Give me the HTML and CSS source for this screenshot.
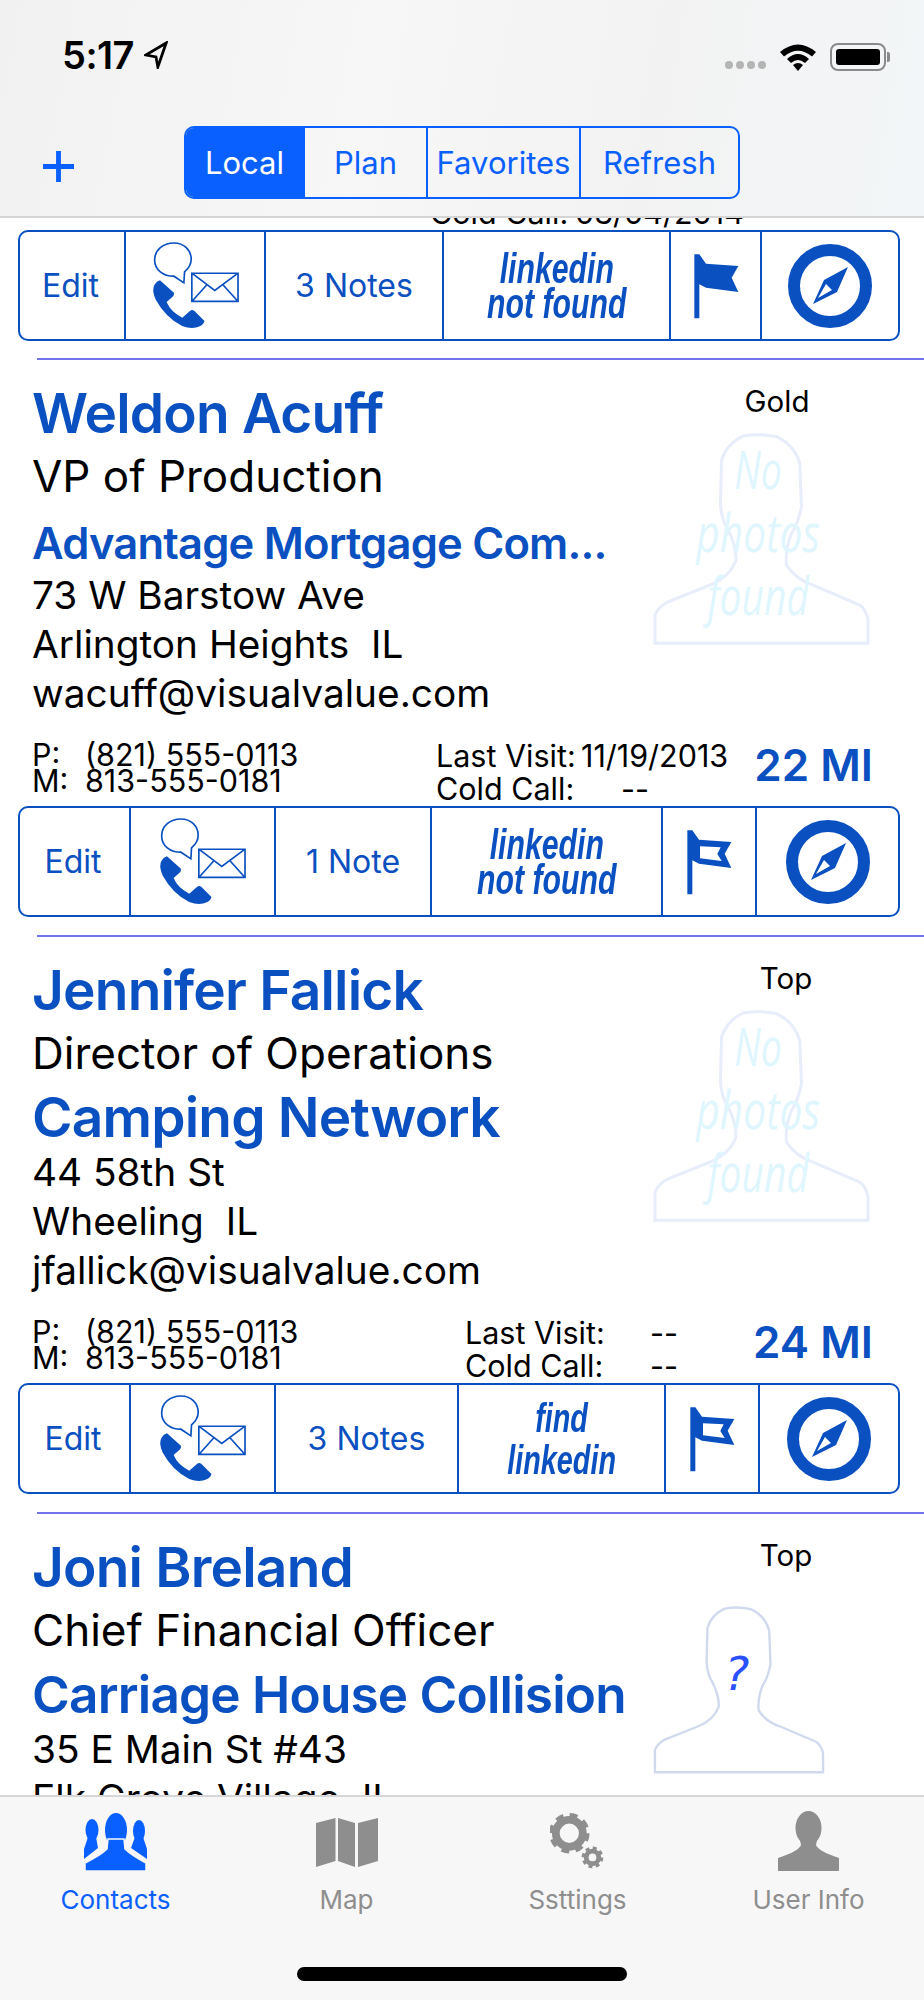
FILE: index.html
```html
<!DOCTYPE html>
<html lang="en">
<head>
    <meta charset="UTF-8">
    <meta name="viewport" content="width=device-width, initial-scale=1.0">
    <title>Contacts</title>
    <link rel="stylesheet" href="styles.css">
</head>
<body>
    <svg class="sprites" width="0" height="0">
        <symbol id="contact-icon" viewBox="70 40 290 280">
            <path class="line" d="M150 55 C118 55 92 76 92 106 C92 136 118 155 150 155 L180 175 L182 142 C196 130 202 118 202 104 C202 76 180 55 150 55Z"/>
            <path class="line" d="M204 146 H343 V231 H204Z M204 146 L273 198 L343 146 M204 231 L250 180 M343 231 L297 180"/>
            <path class="solid" d="M108 167 L150 205 Q152 212 146 217 L128 233 Q140 262 175 280 L200 258 Q206 255 212 260 L242 290 Q240 300 228 306 Q205 316 175 305 Q125 280 95 225 Q82 195 92 180 Q98 170 108 167Z"/>
        </symbol>
        <symbol id="flag-solid" viewBox="130 80 150 210">
            <path class="solid" d="M140 90 H155 L175 118 L272 125 L252 160 L272 203 L175 190 L155 180 V282 H140Z"/>
        </symbol>
        <symbol id="flag-open" viewBox="130 80 150 210">
            <path class="solid" fill-rule="evenodd" d="M140 90 H155 L175 118 L272 125 L252 160 L272 203 L175 190 L155 180 V282 H140Z M178 138 L240 141 L230 161 L243 182 L178 174Z"/>
        </symbol>
        <symbol id="compass" viewBox="-42 -42 84 84">
            <circle class="ring" r="36"/>
            <path class="solid" fill-rule="evenodd" d="M18 -19 L-6 -6 L-17 18 L7 6Z M-12 12 L-4 -2 L2 4Z"/>
        </symbol>
        <symbol id="person" viewBox="60 30 670 650">
            <path d="M75 670 L75 585 Q85 560 115 545 L240 495 Q300 470 318 420 Q320 380 295 330 Q270 290 272 240 L275 120 Q290 70 340 47 Q390 38 440 49 Q495 75 510 130 L515 260 Q505 310 485 340 Q465 390 470 435 Q500 480 550 495 L690 555 Q710 570 715 600 L715 670Z"/>
        </symbol>
    </svg>

    <div class="screen">
        <header class="top">
            <div class="status">
                <div class="time">5:17
                    <svg class="arrow" viewBox="0 0 26 30"><path d="M24 2 L2 15 L13 17 L15 28Z"/></svg>
                </div>
                <div class="status-right">
                    <div class="dots"><i></i><i></i><i></i><i></i></div>
                    <svg class="wifi" viewBox="0 0 38 28">
                        <path d="M1 9 Q19 -6 37 9 L33 13.500 Q19 2 5 13.500Z"/>
                        <path d="M8 16 Q19 6 30 16 L26 20 Q19 14 12 20Z"/>
                        <path d="M14 22 Q19 18 24 22 L19 28Z"/>
                    </svg>
                    <div class="battery"><span></span></div>
                </div>
            </div>
            <nav class="nav">
                <svg class="plus" viewBox="0 0 32 32"><path d="M13.500 0 H18.500 V13.500 H32 V18.500 H18.500 V32 H13.500 V18.500 H0 V13.500 H13.500Z"/></svg>
                <div class="segments">
                    <div class="segment active seg-local">Local</div>
                    <div class="segment seg-plan">Plan</div>
                    <div class="segment seg-fav">Favorites</div>
                    <div class="segment seg-refresh">Refresh</div>
                </div>
            </nav>
        </header>

        <main class="list">
            <div class="info info-clipped">
                <div class="visit">
                    <div class="visit-line"><span class="visit-label">Last Visit:</span>11/19/2013</div>
                    <div class="visit-line"><span class="visit-label">Cold Call:</span>03/04/2014</div>
                </div>
            </div>
            <div class="actions actions-a">
                <div class="action">Edit</div>
                <div class="action"><svg class="icon-contact"><use href="#contact-icon"/></svg></div>
                <div class="action">3 Notes</div>
                <div class="action linkedin"><span>linkedin<br>not found</span></div>
                <div class="action"><svg class="icon-flag"><use href="#flag-solid"/></svg></div>
                <div class="action"><svg class="icon-compass"><use href="#compass"/></svg></div>
            </div>

            <section class="card">
                <div class="rule"></div>
                <div class="card-top">
                    <div class="details">
                        <div class="name">Weldon Acuff</div>
                        <div class="role">VP of Production</div>
                        <div class="company company-small">Advantage Mortgage Com...</div>
                        <div class="line">73 W Barstow Ave</div>
                        <div class="line">Arlington Heights&nbsp; IL</div>
                        <div class="line">wacuff@visualvalue.com</div>
                    </div>
                    <div class="photo">
                        <div class="tier">Gold</div>
                        <svg class="avatar" viewBox="60 30 670 650">
                            <use href="#person" class="outline faded" x="60" y="30" width="670" height="650"/>
                            <text class="no-photo" x="385" y="205" text-anchor="middle" textLength="143" lengthAdjust="spacingAndGlyphs">No</text>
                            <text class="no-photo" x="385" y="395" text-anchor="middle" textLength="372" lengthAdjust="spacingAndGlyphs">photos</text>
                            <text class="no-photo" x="385" y="585" text-anchor="middle" textLength="305" lengthAdjust="spacingAndGlyphs">found</text>
                        </svg>
                    </div>
                </div>
                <div class="info">
                    <div class="phones">
                        <div class="phone"><span class="phone-label">P:</span>(821) 555-0113</div>
                        <div class="phone"><span class="phone-label">M:</span>813-555-0181</div>
                    </div>
                    <div class="visit">
                        <div class="visit-line"><span class="visit-label">Last Visit:</span>11/19/2013</div>
                        <div class="visit-line"><span class="visit-label">Cold Call:</span><span class="dash">--</span></div>
                    </div>
                    <div class="distance">22 MI</div>
                </div>
                <div class="actions actions-b">
                    <div class="action">Edit</div>
                    <div class="action"><svg class="icon-contact"><use href="#contact-icon"/></svg></div>
                    <div class="action">1 Note</div>
                    <div class="action linkedin"><span>linkedin<br>not found</span></div>
                    <div class="action"><svg class="icon-flag"><use href="#flag-open"/></svg></div>
                    <div class="action"><svg class="icon-compass"><use href="#compass"/></svg></div>
                </div>
            </section>

            <section class="card">
                <div class="rule"></div>
                <div class="card-top">
                    <div class="details">
                        <div class="name">Jennifer Fallick</div>
                        <div class="role">Director of Operations</div>
                        <div class="company">Camping Network</div>
                        <div class="line">44 58th St</div>
                        <div class="line">Wheeling&nbsp; IL</div>
                        <div class="line">jfallick@visualvalue.com</div>
                    </div>
                    <div class="photo">
                        <div class="tier tier-top">Top</div>
                        <svg class="avatar" viewBox="60 30 670 650">
                            <use href="#person" class="outline faded" x="60" y="30" width="670" height="650"/>
                            <text class="no-photo" x="385" y="205" text-anchor="middle" textLength="143" lengthAdjust="spacingAndGlyphs">No</text>
                            <text class="no-photo" x="385" y="395" text-anchor="middle" textLength="372" lengthAdjust="spacingAndGlyphs">photos</text>
                            <text class="no-photo" x="385" y="585" text-anchor="middle" textLength="305" lengthAdjust="spacingAndGlyphs">found</text>
                        </svg>
                    </div>
                </div>
                <div class="info">
                    <div class="phones">
                        <div class="phone"><span class="phone-label">P:</span>(821) 555-0113</div>
                        <div class="phone"><span class="phone-label">M:</span>813-555-0181</div>
                    </div>
                    <div class="visit visit-empty">
                        <div class="visit-line"><span class="visit-label">Last Visit:</span><span class="dash">--</span></div>
                        <div class="visit-line"><span class="visit-label">Cold Call:</span><span class="dash">--</span></div>
                    </div>
                    <div class="distance">24 MI</div>
                </div>
                <div class="actions actions-c">
                    <div class="action">Edit</div>
                    <div class="action"><svg class="icon-contact"><use href="#contact-icon"/></svg></div>
                    <div class="action">3 Notes</div>
                    <div class="action linkedin linkedin-find"><span>find<br>linkedin</span></div>
                    <div class="action"><svg class="icon-flag"><use href="#flag-open"/></svg></div>
                    <div class="action"><svg class="icon-compass"><use href="#compass"/></svg></div>
                </div>
            </section>

            <section class="card">
                <div class="rule"></div>
                <div class="card-top">
                    <div class="details">
                        <div class="name">Joni Breland</div>
                        <div class="role">Chief Financial Officer</div>
                        <div class="company company-mid">Carriage House Collision</div>
                        <div class="line">35 E Main St #43</div>
                        <div class="line">Elk Grove Village&nbsp; IL</div>
                    </div>
                    <div class="photo">
                        <div class="tier tier-top">Top</div>
                        <svg class="avatar avatar-small" viewBox="60 30 670 650">
                            <use href="#person" class="outline" x="60" y="30" width="670" height="650"/>
                            <text class="question" x="387" y="358" text-anchor="middle">?</text>
                        </svg>
                    </div>
                </div>
            </section>
        </main>

        <footer class="tabs">
            <div class="tab-row">
                <div class="tab active">
                    <svg class="tab-icon icon-people" viewBox="0 0 63 58">
                        <ellipse cx="8" cy="17" rx="6.500" ry="11"/>
                        <ellipse cx="55" cy="18" rx="6" ry="11"/>
                        <path d="M4 24 H12 L14 35 L0 46 V36Z M51 24 H59 L63 36 V46 L47 35Z"/>
                        <ellipse cx="32" cy="17" rx="11" ry="17"/>
                        <path class="people-front" d="M24 26 H40 L41 36 Q47 42 62 50 V58 H1 V50 Q17 42 23 36Z"/>
                    </svg>
                    <span>Contacts</span>
                </div>
                <div class="tab">
                    <svg class="tab-icon icon-map" viewBox="0 0 62 50">
                        <path d="M0 5 L19.500 0 V43 L0 49Z M22 0 L39 5 V49 L22 43Z M42 5 L62 0 V43 L42 49Z"/>
                    </svg>
                    <span>Map</span>
                </div>
                <div class="tab">
                    <svg class="tab-icon icon-gears" viewBox="0 0 56 58">
                        <circle class="gear-ring" cx="20" cy="21" r="14" stroke-width="8"/>
                        <circle class="gear-ring" cx="20" cy="21" r="18.500" stroke-width="5" stroke-dasharray="8 6.500"/>
                        <circle class="gear-ring" cx="44" cy="46" r="6.500" stroke-width="5"/>
                        <circle class="gear-ring" cx="44" cy="46" r="9.500" stroke-width="3.500" stroke-dasharray="4 3.460"/>
                    </svg>
                    <span>Ssttings</span>
                </div>
                <div class="tab">
                    <svg class="tab-icon" viewBox="0 0 61 60">
                        <ellipse cx="30.500" cy="17" rx="13" ry="17"/>
                        <path d="M21 24 H40 L38 34 Q40 40 61 47 V60 H0 V47 Q21 40 23 34Z"/>
                    </svg>
                    <span>User Info</span>
                </div>
            </div>
            <div class="home-bar"></div>
        </footer>
    </div>
</body>
</html>
```

FILE: styles.css
```css
* {
    box-sizing: border-box;
}

body {
    margin: 0;
    font-family: Inter, "Liberation Sans", sans-serif;
    background-color: #fff;
    color: #000;
}

.sprites {
    position: absolute;
}

.screen {
    width: 924px;
    height: 2000px;
    display: flex;
    flex-direction: column;
    overflow: hidden;
}

/* header */
.top {
    flex: none;
    height: 218px;
    background: linear-gradient(100deg, #f1f1f1, #f7f7f7 40%, #f2f2f2 70%, #f3f6f8);
    border-bottom: 2px solid #d4d4d4;
}

.status {
    height: 126px;
    padding: 34px 38px 0 62px;
    display: flex;
    justify-content: space-between;
}

.time {
    display: flex;
    align-items: center;
    gap: 10px;
    height: 42px;
    font-size: 38px;
    font-weight: 600;
    letter-spacing: -0.5px;
}

.arrow {
    width: 24px;
    height: 28px;
    fill: none;
    stroke: #000;
    stroke-width: 3;
}

.status-right {
    display: flex;
    align-items: flex-start;
    padding-top: 9px;
}

.dots {
    display: flex;
    gap: 3px;
    margin: 18px 13px 0 0;
}

.dots i {
    width: 8px;
    height: 8px;
    border-radius: 50%;
    background-color: #b4b4b4;
}

.wifi {
    width: 38px;
    height: 28px;
    margin-right: 13px;
}

.battery {
    position: relative;
    width: 56px;
    height: 28px;
    padding: 4px;
    border: 2px solid #8a8a8a;
    border-radius: 8px;
}

.battery span {
    display: block;
    height: 100%;
    background-color: #000;
    border-radius: 3px;
}

.battery::after {
    content: "";
    position: absolute;
    right: -6px;
    top: 7px;
    width: 3px;
    height: 10px;
    background-color: #8a8a8a;
    border-radius: 0 2px 2px 0;
}

.nav {
    display: flex;
    align-items: flex-start;
    padding-left: 43px;
}

.plus {
    width: 31px;
    height: 31px;
    margin: 25px 110px 0 0;
    fill: #0a60ff;
}

.segments {
    display: flex;
    width: 556px;
    height: 73px;
    border: 2px solid #0a60ff;
    border-radius: 10px;
    overflow: hidden;
}

.segment {
    display: flex;
    align-items: center;
    justify-content: center;
    font-size: 31px;
    color: #0a60ff;
    border-right: 2px solid #0a60ff;
}

.segment.active {
    color: #fff;
    background-color: #0a60ff;
}

.seg-local { width: 119px; }
.seg-plan { width: 123px; }
.seg-fav { width: 153px; }
.seg-refresh { flex: 1; border-right: 0; }

/* contact list */
.list {
    flex: 1;
    min-height: 0;
    overflow: hidden;
}

.rule {
    height: 2px;
    margin-left: 37px;
    background-color: #7373f0;
}

.card-top {
    display: flex;
    height: 355px;
}

.details {
    width: 640px;
    padding: 23px 0 0 32px;
}

.name {
    font-size: 55px;
    line-height: 60px;
    font-weight: 600;
    letter-spacing: -0.8px;
    color: #0a50c0;
}

.role {
    margin-top: 10px;
    font-size: 44px;
    line-height: 46px;
}

.company {
    margin: 14px 0 3px;
    font-size: 55px;
    line-height: 54px;
    font-weight: 600;
    letter-spacing: -0.8px;
    color: #0a50c0;
}

.company-small {
    margin: 17px 0 0;
    font-size: 43.500px;
}

.company-mid {
    font-size: 51.300px;
}

.line {
    font-size: 38.800px;
    line-height: 49px;
}

.photo {
    width: 274px;
}

.tier {
    margin-top: 25px;
    height: 32px;
    font-size: 29.500px;
    line-height: 32px;
    text-align: center;
}

.tier-top {
    padding-left: 18px;
}

.avatar {
    display: block;
    width: 223px;
    height: 217px;
    margin: 13px 0 0 10px;
}

.avatar-small {
    width: 176px;
    height: 171px;
    margin: 33px 0 0 11px;
}

.outline {
    fill: none;
    stroke: #d0d9ee;
    stroke-width: 9;
}

.outline.faded {
    stroke: #e8edfc;
}

.no-photo {
    font-family: "Open Sans", sans-serif;
    font-style: italic;
    font-size: 158px;
    fill: #dff6ff;
}

.question {
    font-family: "DejaVu Sans", sans-serif;
    font-style: italic;
    font-size: 178px;
    fill: #2a50ff;
}

.info {
    display: flex;
    align-items: flex-start;
    height: 91px;
    padding: 24px 51px 0 32px;
}

.info-clipped {
    margin-top: -79px;
    padding-left: 430px;
}

.phones {
    width: 404px;
    margin-top: 3px;
    font-size: 30.500px;
    line-height: 26px;
}

.phone-label {
    display: inline-block;
    width: 53px;
}

.visit {
    font-size: 30.500px;
    line-height: 33px;
    white-space: nowrap;
}

.visit-empty {
    margin-left: 29px;
}

.visit-label {
    display: inline-block;
    width: 145px;
}

.dash {
    margin-left: 40px;
}

.distance {
    margin-left: auto;
    font-size: 44px;
    line-height: 52px;
    font-weight: 600;
    color: #0a50c0;
    white-space: nowrap;
}

.actions {
    display: grid;
    height: 111px;
    margin: 0 24px 18px 18px;
    border: 2px solid #0a50c0;
    border-radius: 10px;
    overflow: hidden;
}

.actions-a {
    grid-template-columns: 106px 140px 178px 227px 91px 1fr;
    margin-bottom: 17px;
}

.actions-b { grid-template-columns: 111px 145px 156px 231px 94px 1fr; }
.actions-c { grid-template-columns: 111px 145px 183px 207px 94px 1fr; }

.action {
    display: flex;
    align-items: center;
    justify-content: center;
    font-size: 32px;
    color: #0a50c0;
    border-right: 2px solid #0a50c0;
}

.action:first-child {
    padding-right: 3px;
}

.action:last-child {
    border-right: 0;
}

.linkedin span {
    font-family: "Liberation Sans", sans-serif;
    font-size: 42px;
    line-height: 35px;
    font-weight: 700;
    font-style: italic;
    text-align: center;
    transform: scaleX(0.72);
    filter: blur(0.6px);
}

.linkedin-find span {
    font-size: 40px;
    line-height: 42px;
}

.icon-contact {
    width: 97px;
    height: 93px;
    margin-top: -2px;
}

.icon-flag {
    width: 50px;
    height: 70px;
}

.icon-compass {
    width: 84px;
    height: 84px;
}

.solid {
    fill: #0a50c0;
}

symbol .line {
    fill: none;
    stroke: #0a50c0;
    stroke-width: 5;
}

.ring {
    fill: none;
    stroke: #0a50c0;
    stroke-width: 12;
}

/* tab bar */
.tabs {
    flex: none;
    height: 205px;
    background-color: #f7f7f7;
    border-top: 2px solid #d6d6d6;
}

.tab-row {
    display: grid;
    grid-template-columns: repeat(4, 1fr);
    height: 170px;
}

.tab {
    display: flex;
    flex-direction: column;
    align-items: center;
    font-size: 26px;
    color: #8e8e8e;
    fill: #8e8e8e;
}

.tab.active {
    color: #0a60ff;
    fill: #0a60ff;
}

.tab-icon {
    height: 60px;
    margin: 14px 0 13px;
}

.icon-people {
    height: 58px;
    margin: 16px 0 13px;
}

.people-front {
    stroke: #f7f7f7;
    stroke-width: 1.500;
}

.icon-map {
    height: 50px;
    margin: 21px 0 16px;
}

.icon-gears {
    height: 56px;
    margin: 16px 0 15px;
}

.gear-ring {
    fill: none;
    stroke: #8e8e8e;
}

.home-bar {
    width: 330px;
    height: 14px;
    margin: 0 auto;
    background-color: #000;
    border-radius: 7px;
}
```
